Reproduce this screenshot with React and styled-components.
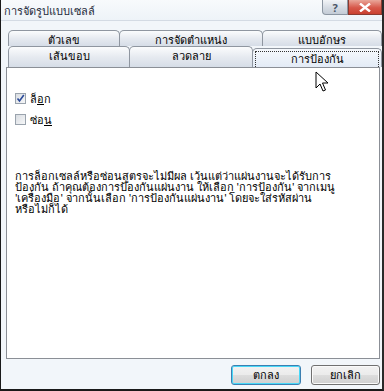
import React from "react";
import styled, { createGlobalStyle } from "styled-components";

const Global = createGlobalStyle`
  html, body { margin: 0; padding: 0; background: #ffffff; }
  body { font-family: Tahoma, "Noto Sans", "DejaVu Sans", sans-serif; font-size: 11px; color: #000; }
`;

const Window = styled.div`
  width: 384px;
  height: 391px;
  box-sizing: border-box;
  border-left: 1px solid #1a1a1a;
  border-right: 2px solid #2a2a2a;
  border-bottom: 2px solid #1a1a1a;
  background: #f2f6fa;
  display: flex;
  flex-direction: column;
  position: relative;
  overflow: hidden;
`;

const TitleBar = styled.div`
  height: 20px;
  flex: none;
  display: flex;
  align-items: flex-start;
  justify-content: space-between;
  background: linear-gradient(#f8fafc, #eef3f8);
  border-bottom: 1px solid #d4dbe4;
`;

const Title = styled.div`
  padding: 4px 0 0 3px;
  font-size: 11px;
  line-height: 13px;
  color: #1e2a3a;
`;

const Caption = styled.div`
  display: flex;
`;

const CapButton = styled.div`
  width: ${(p) => p.$w}px;
  height: 15px;
  box-sizing: border-box;
  display: flex;
  align-items: center;
  justify-content: center;
  border: 1px solid ${(p) => (p.$close ? "#8a3a30" : "#8c96a2")};
  border-top: none;
  border-radius: ${(p) => (p.$close ? "0" : "0 0 0 4px")};
  background: ${(p) =>
    p.$close
      ? "linear-gradient(#e9a79a, #d7584a 55%, #c9402f)"
      : "linear-gradient(#f2f4f7, #d5dbe3 55%, #c4ccd6)"};
  color: ${(p) => (p.$close ? "#fff" : "#4a5566")};
  font-size: 11px;
  font-weight: bold;
`;

const TabArea = styled.div`
  flex: none;
  padding: 9px 2px 0 5px;
  display: flex;
  flex-direction: column;
`;

const TabRow = styled.div`
  display: flex;
  height: ${(p) => p.$h}px;
  padding-left: 2px;
`;

const Tab = styled.div`
  width: ${(p) => p.$w}px;
  box-sizing: border-box;
  flex: none;
  border: 1px solid #8f96a0;
  border-bottom: none;
  border-radius: 5px 5px 0 0;
  margin-right: -1px;
  background: ${(p) =>
    p.$active
      ? "linear-gradient(#f6f9fd, #e3ebf6)"
      : "linear-gradient(#fbfcfd, #e6eaf0 50%, #d6dde7)"};
  display: flex;
  align-items: ${(p) => (p.$active ? "stretch" : "flex-start")};
  justify-content: center;
  font-size: 11px;
  line-height: 13px;
  padding: ${(p) => (p.$active ? "2px 2px 0 2px" : "2px 0 0 0")};
  margin-top: ${(p) => (p.$active ? "2px" : "0")};
`;

const Focus = styled.div`
  flex: 1;
  border: 1px dotted #333;
  border-bottom: none;
  text-align: center;
`;

const Panel = styled.div`
  flex: 1;
  margin: 0 2px 0 5px;
  background: #ffffff;
  border: 1px solid #8b8f96;
  display: flex;
  flex-direction: column;
  padding: 25px 0 0 8px;
`;

const CheckRow = styled.label`
  display: flex;
  align-items: center;
  gap: 4px;
  height: 11px;
  margin-bottom: 10px;
  font-size: 11px;
`;

const Box = styled.span`
  width: 11px;
  height: 11px;
  box-sizing: border-box;
  border: 1px solid #9aa3ad;
  background: linear-gradient(135deg, #d9dde2, #f6f7f8);
  display: flex;
  align-items: center;
  justify-content: center;
`;

const U = styled.span`
  text-decoration: underline;
`;

const Note = styled.p`
  margin: 35px 0 0 0;
  font-size: 11px;
  line-height: 11px;
  white-space: nowrap;
`;

const Footer = styled.div`
  height: 30px;
  flex: none;
  display: flex;
  justify-content: flex-end;
  align-items: flex-start;
  gap: 10px;
  padding: 6px 2px 0 0;
  box-sizing: border-box;
`;

const Button = styled.div`
  width: ${(p) => p.$w}px;
  height: 20px;
  box-sizing: border-box;
  border: 1px solid ${(p) => (p.$def ? "#3c7fb1" : "#707070")};
  border-radius: 3px;
  background: linear-gradient(#f2f2f2, #ebebeb 50%, #dddddd 51%, #cfcfcf);
  box-shadow: ${(p) => (p.$def ? "inset 0 0 0 1px #48d8f8" : "inset 0 0 0 1px #fafafa")};
  display: flex;
  align-items: center;
  justify-content: center;
  font-size: 11px;
`;

const Cursor = styled.svg`
  position: absolute;
  left: 314px;
  top: 71px;
`;

export default function App() {
  return (
    <>
      <Global />
      <Window>
        <TitleBar>
          <Title>การจัดรูปแบบเซลล์</Title>
          <Caption>
            <CapButton $w={26}>?</CapButton>
            <CapButton $w={34} $close>
              <svg width="12" height="9" viewBox="0 0 12 9">
                <path d="M1 0.5 L11 8.5 M11 0.5 L1 8.5" stroke="#fff" strokeWidth="2.4" />
              </svg>
            </CapButton>
          </Caption>
        </TitleBar>
        <TabArea>
          <TabRow $h={16}>
            <Tab $w={112}>ตัวเลข</Tab>
            <Tab $w={144}>การจัดตำแหน่ง</Tab>
            <Tab $w={120}>แบบอักษร</Tab>
          </TabRow>
          <TabRow $h={21}>
            <Tab $w={122}>เส้นขอบ</Tab>
            <Tab $w={124}>ลวดลาย</Tab>
            <Tab $w={130} $active>
              <Focus>การป้องกัน</Focus>
            </Tab>
          </TabRow>
        </TabArea>
        <Panel>
          <CheckRow>
            <Box>
              <svg width="9" height="9" viewBox="0 0 9 9">
                <path d="M1.5 4.5 L3.5 7 L7.8 1" stroke="#2b4a9a" strokeWidth="1.6" fill="none" />
              </svg>
            </Box>
            <span>
              ล็<U>อ</U>ก
            </span>
          </CheckRow>
          <CheckRow>
            <Box />
            <span>
              ซ่อ<U>น</U>
            </span>
          </CheckRow>
          <Note>
            การล็อกเซลล์หรือซ่อนสูตรจะไม่มีผล เว้นแต่ว่าแผ่นงานจะได้รับการ
            <br />
            ป้องกัน ถ้าคุณต้องการป้องกันแผ่นงาน ให้เลือก 'การป้องกัน' จากเมนู
            <br />
            'เครื่องมือ' จากนั้นเลือก 'การป้องกันแผ่นงาน' โดยจะใส่รหัสผ่าน
            <br />
            หรือไม่ก็ได้
          </Note>
        </Panel>
        <Footer>
          <Button $w={70} $def>ตกลง</Button>
          <Button $w={69}>ยกเลิก</Button>
        </Footer>
        <Cursor width="14" height="22" viewBox="0 0 14 22">
          <path d="M1 1 L1 17 L5 13 L8 20 L10.5 19 L7.5 12 L13 12 Z" fill="#fff" stroke="#000" strokeWidth="1" />
        </Cursor>
      </Window>
    </>
  );
}
